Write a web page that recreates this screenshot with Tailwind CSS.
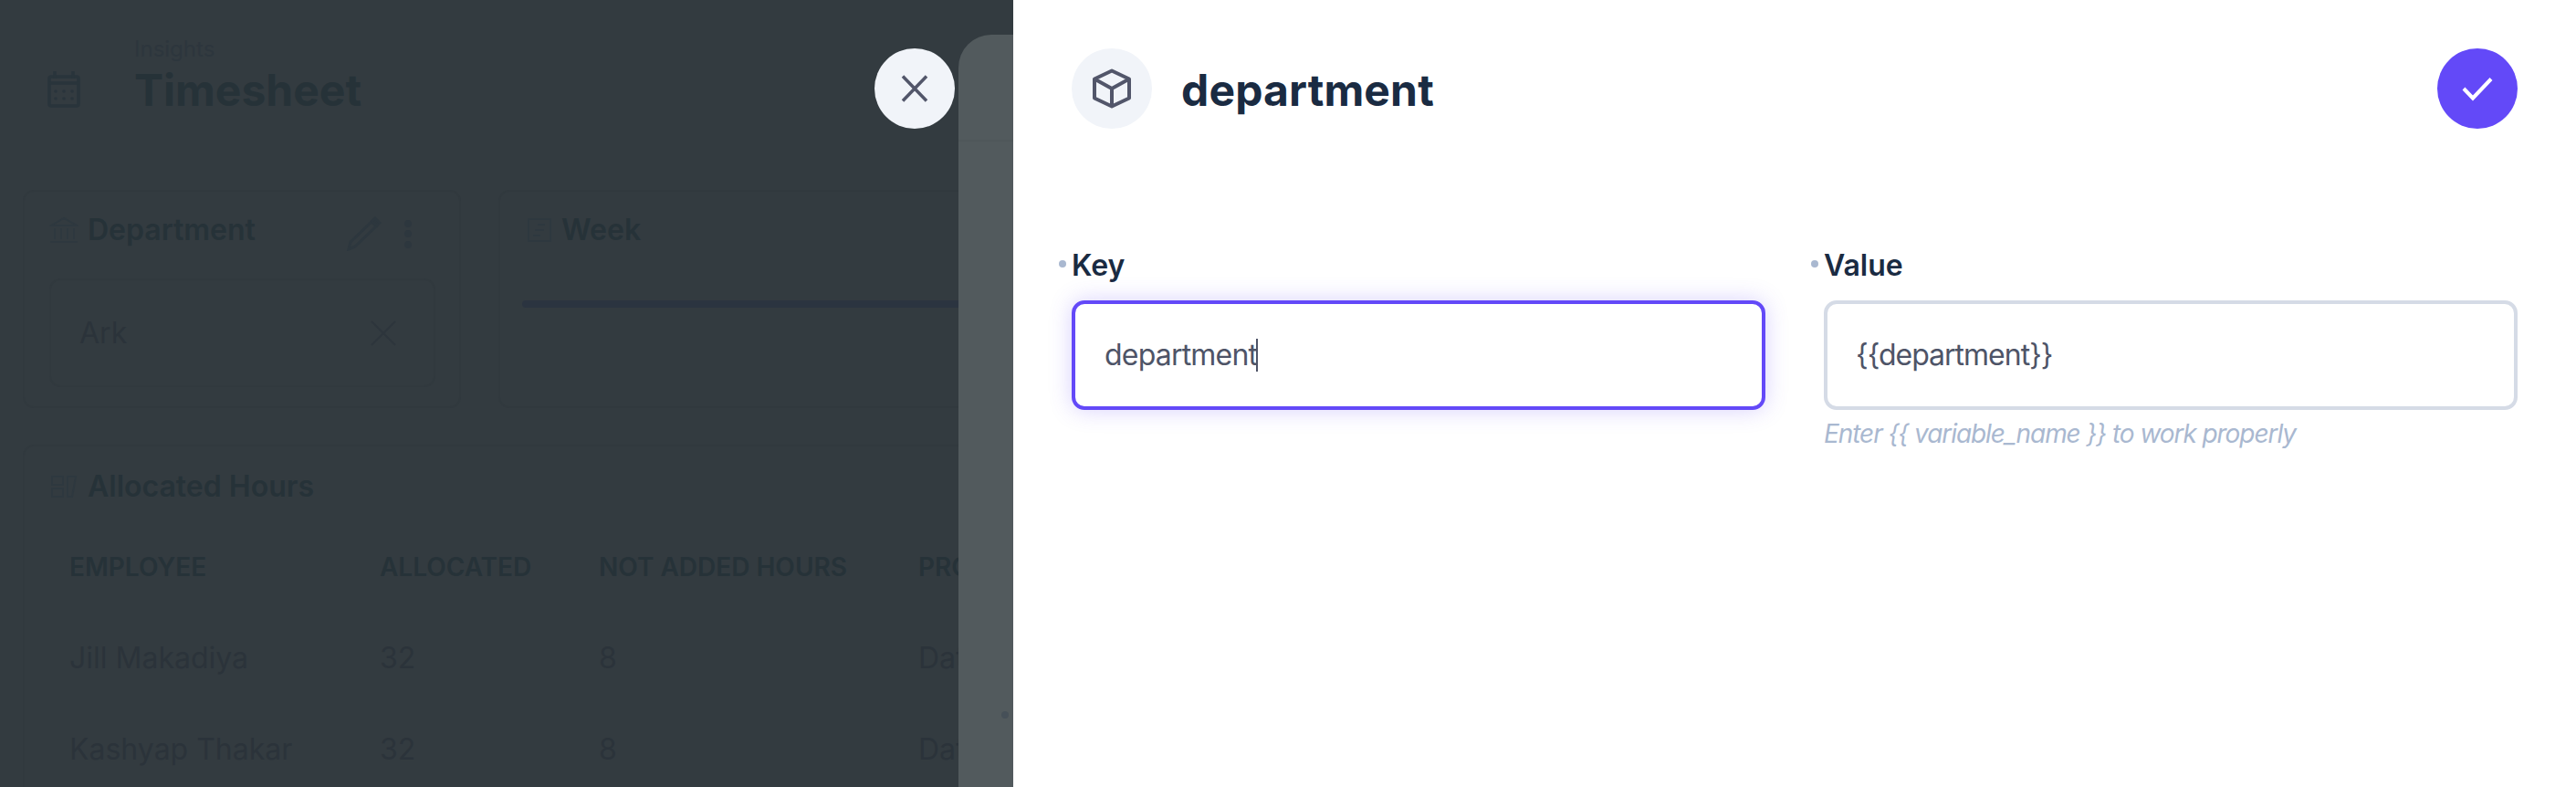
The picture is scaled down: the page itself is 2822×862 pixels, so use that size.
<!DOCTYPE html>
<html lang="en">
<head>
    <meta charset="UTF-8">
    <title>Timesheet</title>
    <script src="https://cdn.jsdelivr.net/npm/@tailwindcss/browser@4"></script>
</head>
<body class="[font-family:Inter,sans-serif]">
<div class="relative h-[862px] w-[2822px] overflow-hidden bg-[#333b40]">

    <!-- page behind the drawer, already dimmed -->
    <div class="pl-[25px] text-[#263238]">
        <div class="flex pl-[21px] pt-[37px] h-[208px] items-start">
            <svg class="w-[48px] h-[48px] mt-[37px] shrink-0" viewBox="0 0 48 48" fill="none" stroke="#29343b" stroke-width="3.5">
                <rect x="8" y="10" width="32" height="32" rx="2"/>
                <path d="M8 17h32M14 4v8M34 4v8"/>
                <g fill="#29343b" stroke="none">
                    <circle cx="15" cy="26" r="1.7"/><circle cx="24" cy="26" r="1.7"/><circle cx="33" cy="26" r="1.7"/>
                    <circle cx="15" cy="34" r="1.7"/><circle cx="24" cy="34" r="1.7"/><circle cx="33" cy="34" r="1.7"/>
                </g>
            </svg>
            <div class="ml-[53px]">
                <div class="text-[24px] leading-[34px] text-[#2d363d]">Insights</div>
                <div class="text-[48px] leading-[56px] font-bold">Timesheet</div>
            </div>
        </div>

        <div class="flex gap-[41px]">
            <div class="w-[480px] h-[239px] shrink-0 rounded-[12px] border-2 border-[#31393e] pl-[27px] pt-[20px]">
                <div class="flex items-center h-[44px]">
                    <svg class="w-[32px] h-[32px] shrink-0" viewBox="0 0 32 32" fill="none" stroke="#2e383f" stroke-width="2">
                        <path d="M2 11 16 3l14 8zM1 29h30M6 14v12M13 14v12M20 14v12M27 14v12"/>
                    </svg>
                    <span class="ml-[10px] text-[32px] font-semibold">Department</span>
                    <svg class="ml-[100px] w-[38px] h-[38px] shrink-0 mt-[8px]" viewBox="0 0 38 38" fill="none" stroke="#2d373e" stroke-width="3">
                        <path d="M2 36l2-8L27 6l5 5L9 33z"/><path d="M31 2l5 5-3 3-5-5z" fill="#2d373e"/>
                    </svg>
                    <div class="ml-[25px] mt-[8px] flex flex-col gap-[3.5px]">
                        <span class="w-[8px] h-[8px] rounded-full bg-[#2d373e]"></span>
                        <span class="w-[8px] h-[8px] rounded-full bg-[#2d373e]"></span>
                        <span class="w-[8px] h-[8px] rounded-full bg-[#2d373e]"></span>
                    </div>
                </div>
                <div class="mt-[31px] flex items-center justify-between w-[423px] h-[119px] rounded-[12px] border-2 border-[#31393e] pl-[31px] pr-[41px] text-[32px] text-[#2b333a]">
                    <span>Ark</span>
                    <svg class="w-[28px] h-[28px]" viewBox="0 0 28 28" stroke="#2d353c" stroke-width="2"><path d="M1 1l26 26M27 1 1 27"/></svg>
                </div>
            </div>
            <div class="w-[600px] h-[239px] shrink-0 rounded-[12px] border-2 border-[#31393e] pl-[29px] pt-[20px]">
                <div class="flex items-center h-[44px]">
                    <svg class="w-[28px] h-[28px] shrink-0" viewBox="0 0 28 28" fill="none" stroke="#2e383f" stroke-width="2">
                        <rect x="2" y="2" width="24" height="24"/><path d="M12 8h8M9 14h10M7 20h8"/>
                    </svg>
                    <span class="ml-[10px] text-[32px] font-semibold">Week</span>
                </div>
                <div class="mt-[55px] -ml-[5px] h-[8px] w-[560px] rounded-full bg-[#2b3440]"></div>
            </div>
        </div>

        <div class="mt-[40px] w-[1200px] h-[400px] rounded-t-[12px] border-2 border-[#31393e] pl-[28px] pt-[22px]">
            <div class="flex items-center h-[44px]">
                <svg class="w-[30px] h-[28px] shrink-0" viewBox="0 0 30 28" fill="none" stroke="#2e383f" stroke-width="2">
                    <path d="M2 3h12v9H2zM2 16h12v9H2zM19 3h9l-4 22h-5z"/>
                </svg>
                <span class="ml-[11px] text-[32px] font-semibold">Allocated Hours</span>
            </div>
            <div class="mt-[44px] pl-[21px] grid grid-cols-[340px_240px_350px_300px] items-center">
                <div class="text-[28px] leading-[44px] font-semibold">EMPLOYEE</div>
                <div class="text-[28px] leading-[44px] font-semibold">ALLOCATED</div>
                <div class="text-[28px] leading-[44px] font-semibold">NOT ADDED HOURS</div>
                <div class="text-[28px] leading-[44px] font-semibold">PROJECT</div>
            </div>
            <div class="mt-[56px] pl-[21px] grid grid-cols-[340px_240px_350px_300px] auto-rows-[100px] text-[32px] leading-[44px] text-[#2b333a]">
                <div>Jill Makadiya</div><div>32</div><div>8</div><div>Data</div>
                <div>Kashyap Thakar</div><div>32</div><div>8</div><div>Data</div>
            </div>
        </div>
    </div>

    <!-- close button -->
    <button class="absolute left-[958px] top-[53px] w-[88px] h-[88px] rounded-full bg-[#f1f4f9] flex items-center justify-center">
        <svg class="w-[48px] h-[48px]" viewBox="0 0 48 48" stroke="#52566a" stroke-width="3.5"><path d="M11 10.5l26 27M37 10.5l-26 27"/></svg>
    </button>

    <!-- drawer underneath -->
    <div class="absolute left-[1050px] top-[38px] bottom-0 w-[120px] rounded-tl-[36px] bg-[#525a5d]">
        <div class="mt-[115px] h-[2px] bg-[#4f575a]"></div>
        <span class="absolute left-[47px] top-[741px] w-[8px] h-[8px] rounded-full bg-[#465058]"></span>
    </div>

    <!-- drawer -->
    <div class="absolute left-[1110px] top-0 right-0 bottom-0 bg-white px-[64px] pt-[53px]">
        <div class="flex items-center justify-between">
            <div class="flex items-center gap-[32px]">
                <div class="w-[88px] h-[88px] rounded-full bg-[#f1f4f9] flex items-center justify-center">
                    <svg class="w-[48px] h-[48px]" viewBox="0 0 48 48" fill="none" stroke="#52566a" stroke-width="4" stroke-linejoin="round">
                        <path d="M24 4.5 43 13.5V34.5L24 43.5 5 34.5V13.5Z"/>
                        <path d="M5 13.5 24 24 43 13.5M24 24V43.5"/>
                    </svg>
                </div>
                <h1 class="pt-[3px] text-[48px] leading-[60px] tracking-[0.15px] font-bold text-[#1a2b42]">department</h1>
            </div>
            <button class="w-[88px] h-[88px] rounded-full bg-[#6349f8] flex items-center justify-center">
                <svg class="w-[48px] h-[48px]" viewBox="0 0 48 48" fill="none" stroke="white" stroke-width="4"><path d="M9 24 19 34.5 39 13.5"/></svg>
            </button>
        </div>

        <div class="mt-[124px] grid grid-cols-2 gap-x-[64px]">
            <div>
                <label class="relative block text-[32px] leading-[48px] pt-[2px] h-[48px] font-semibold text-[#1a2b42] mb-[16px]">
                    <span class="absolute -left-[14px] top-[20px] w-[8px] h-[8px] rounded-full bg-[#a9b8d0]"></span>
                    Key
                </label>
                <div class="flex items-center h-[120px] rounded-[14px] border-4 border-[#6349f8] px-[32px] text-[32px] tracking-[-0.8px] text-[#4e5467] shadow-[0_0_24px_rgba(99,73,248,0.25)]">
                    department<span class="-ml-px w-[2px] h-[36px] bg-[#4e5467]"></span>
                </div>
            </div>
            <div>
                <label class="relative block text-[32px] leading-[48px] pt-[2px] h-[48px] font-semibold text-[#1a2b42] mb-[16px]">
                    <span class="absolute -left-[14px] top-[20px] w-[8px] h-[8px] rounded-full bg-[#a9b8d0]"></span>
                    Value
                </label>
                <div class="flex items-center h-[120px] rounded-[14px] border-4 border-[#d5dbe6] pl-[31px] pr-[32px] text-[32px] tracking-[-1px] text-[#4e5467]">{{department}}</div>
                <p class="mt-[8px] text-[28px] leading-[36px] tracking-[-1.07px] italic text-[#a9b8d0]">Enter {{ variable_name }} to work properly</p>
            </div>
        </div>
    </div>
</div>
</body>
</html>
